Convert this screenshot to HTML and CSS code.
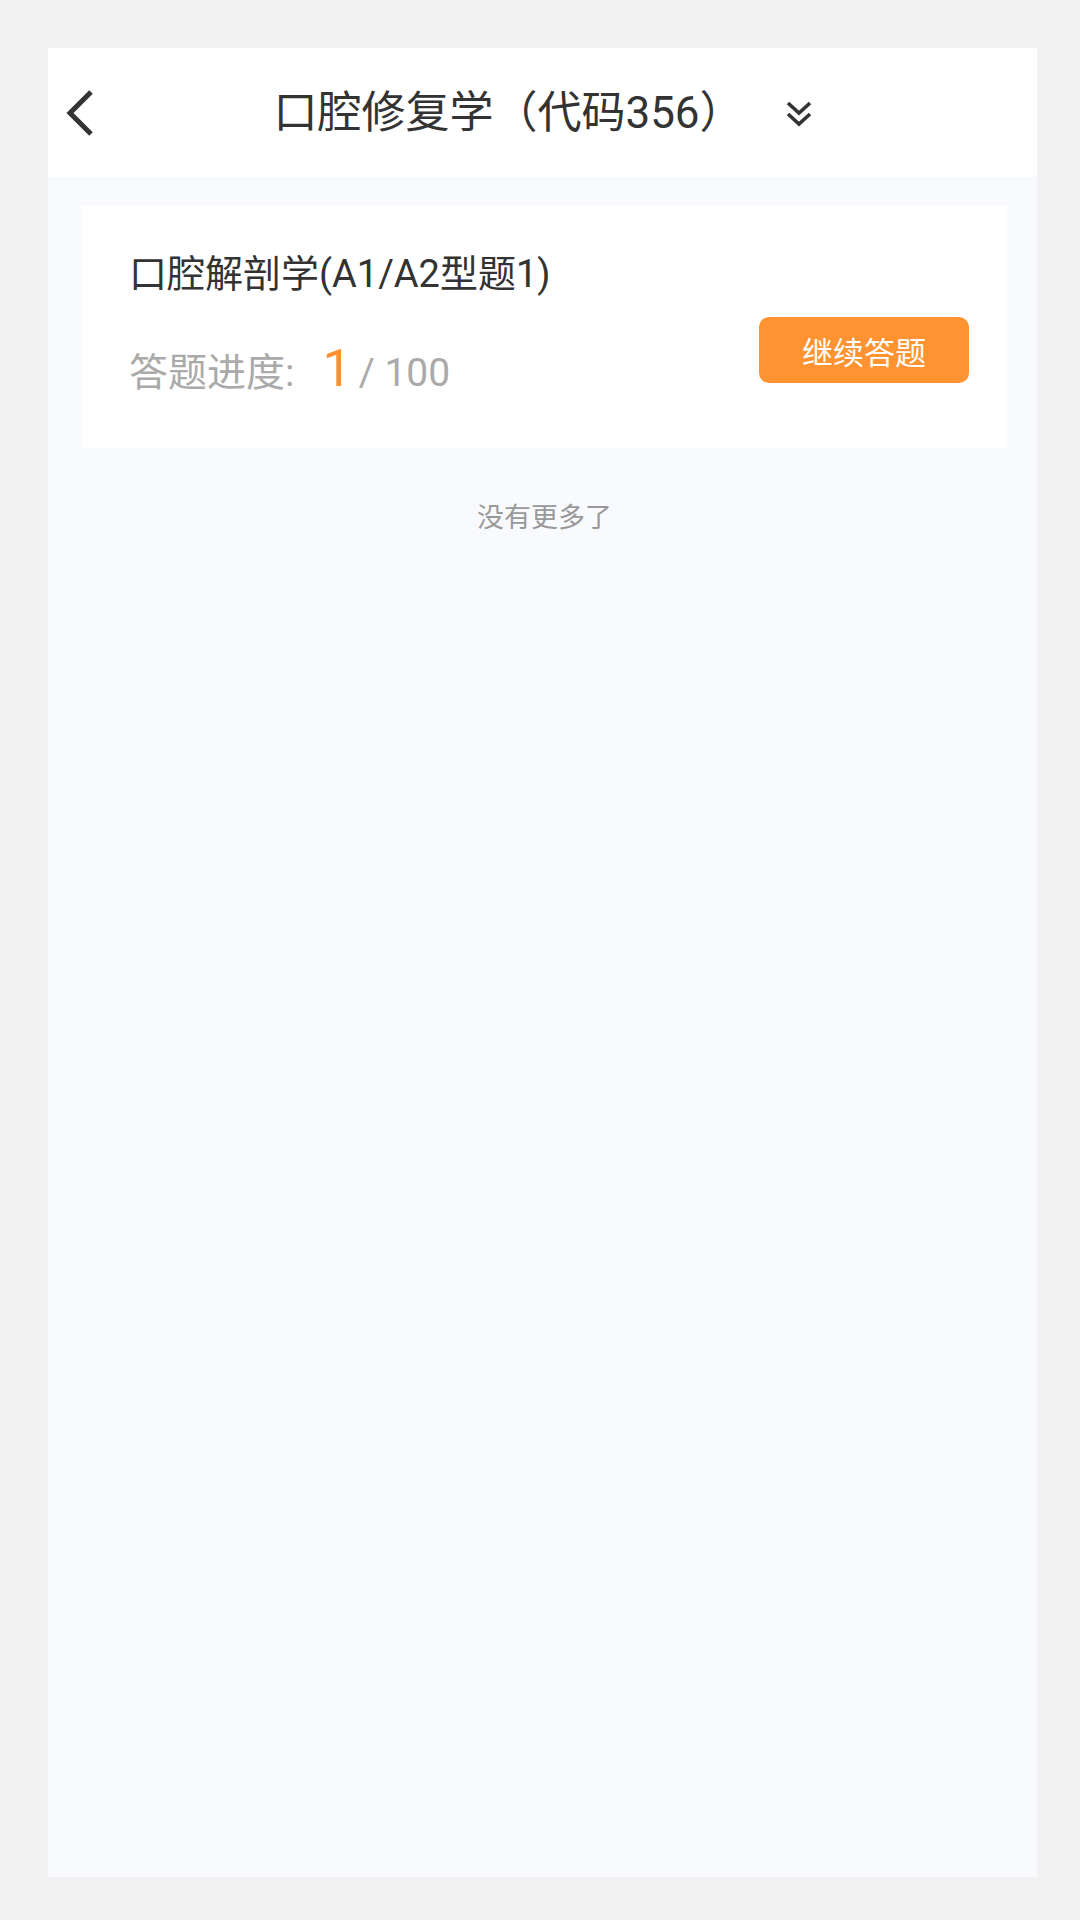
FILE: index.html
```html
<!DOCTYPE html>
<html lang="zh-CN">
<head>
  <meta charset="UTF-8">
  <meta name="viewport" content="width=device-width, initial-scale=1.0">
  <title>口腔修复学（代码356）</title>
  <link rel="stylesheet" href="styles.css">
</head>
<body>

<div class="page">
  <!-- Top bar -->
  <header class="topbar">
    <a class="back" href="#">
      <svg width="30" height="48" viewBox="0 0 30 48">
        <polyline points="25,3 4,24 25,45" fill="none" stroke="#333" stroke-width="5"/>
      </svg>
    </a>
    <div class="title-group">
      <h1>口腔修复学（代码356）</h1>
      <svg class="more" width="26" height="28" viewBox="0 0 26 28">
        <polyline points="2,3 13,13 24,3" fill="none" stroke="#333" stroke-width="3.6"/>
        <polyline points="2,14 13,24 24,14" fill="none" stroke="#333" stroke-width="3.6"/>
      </svg>
    </div>
    <div></div>
  </header>

  <div class="content">
    <div class="card">
      <h2>口腔解剖学(A1/A2型题1)</h2>
      <div class="card-row">
        <p class="progress">答题进度:<span class="done">1</span><span class="total">/ 100</span></p>
        <button type="button" class="continue">继续答题</button>
      </div>
    </div>

    <p class="no-more">没有更多了</p>
  </div>
</div>

</body>
</html>
```

FILE: styles.css
```css
/* General Styles */
body {
  font-family: Roboto, "Noto Sans CJK SC", sans-serif;
  margin: 0;
  padding: 48px 43px 43px 48px;
  background-color: #f2f2f2;
}
.page {
  height: 1829px;
  background: #f9fafe;
  display: flex;
  flex-direction: column;
}
.topbar {
  height: 129px;
  background: #fff;
  display: grid;
  grid-template-columns: 1fr auto 1fr;
  align-items: center;
}
.back {
  display: flex;
  margin-left: 18px;
}
.title-group {
  display: flex;
  align-items: center;
  gap: 42px;
}
.title-group h1 {
  margin: 0;
  font-size: 44px;
  font-weight: normal;
  color: #333;
  line-height: 1;
}
.title-group .more {
  margin-top: 2px;
}
.content {
  padding: 29px 30px 0 34px;
}
.card {
  background: #fff;
  padding: 50px 38px 53px 47px;
}
.card h2 {
  margin: 0;
  font-size: 38px;
  font-weight: normal;
  color: #333;
  line-height: 36px;
}
.card-row {
  display: flex;
  justify-content: space-between;
  align-items: flex-start;
  margin-top: 25px;
}
.progress {
  margin: 30px 0 0;
  font-size: 39px;
  color: #aaa;
  line-height: 44px;
}
.progress .done {
  font-size: 52px;
  color: #ff922e;
  margin: 0 7px 0 28px;
}
.progress .total {
  font-size: 39px;
}
.continue {
  width: 210px;
  height: 66px;
  border: none;
  border-radius: 10px;
  background: #ff9332;
  color: #fff;
  font-family: inherit;
  font-size: 31px;
  padding: 0;
}
.no-more {
  margin: 56px 0 0;
  text-align: center;
  font-size: 27px;
  line-height: 28px;
  color: #999;
}
```
